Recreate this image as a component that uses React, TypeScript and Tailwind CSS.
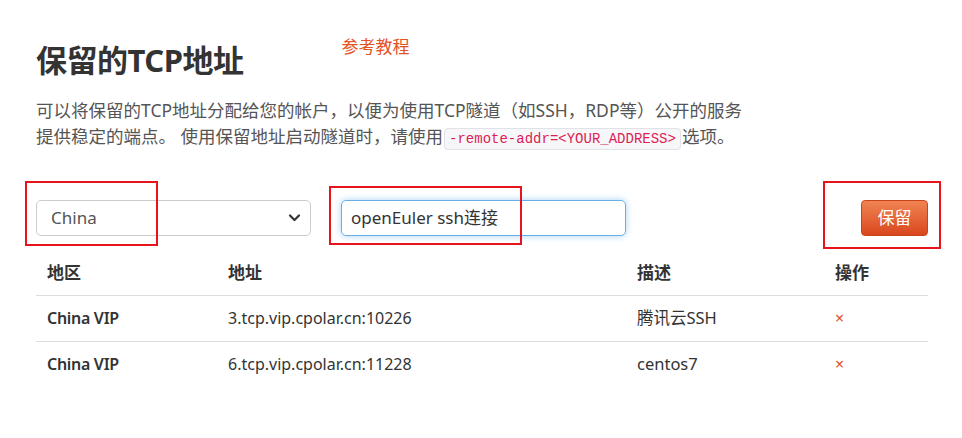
import React from 'react';

const rows = [
  { region: 'China VIP', addr: '3.tcp.vip.cpolar.cn:10226', desc: '腾讯云SSH' },
  { region: 'China VIP', addr: '6.tcp.vip.cpolar.cn:11228', desc: 'centos7' },
];

const App: React.FC = () => {
  return (
    <div
      className="relative w-[962px] h-[438px] bg-white text-[#333] pl-[36px] pt-[41px] overflow-hidden"
      style={{ fontFamily: '"Noto Sans", "Noto Sans CJK SC", sans-serif' }}
    >
      {/* Title */}
      <div className="flex items-start">
        <h1 className="text-[31px] leading-[38px] font-bold text-[#333] tracking-[-0.5px]">保留的TCP地址</h1>
        <a className="ml-[98px] -mt-[6px] text-[17px] leading-[24px] text-[#e4521f]">参考教程</a>
      </div>

      {/* Description */}
      <p className="mt-[18px] w-[780px] text-[17.5px] leading-[26px] text-[#555]">
        可以将保留的TCP地址分配给您的帐户，以便为使用TCP隧道（如SSH，RDP等）公开的服务
        <br />
        提供稳定的端点。 使用保留地址启动隧道时，请使用
        <code
          className="mx-[1px] px-[4px] py-[2px] rounded-[4px] border border-[#e1e1e8] bg-[#f7f7f9] text-[14px] text-[#dd1d55]"
          style={{ fontFamily: '"Liberation Mono", monospace' }}
        >
          -remote-addr=&lt;YOUR_ADDRESS&gt;
        </code>
        选项。
      </p>

      {/* Form row */}
      <div className="mt-[48px] w-[892px] flex items-center">
        <div className="relative w-[275px] h-[36px] border border-[#ccc] rounded-[5px] flex items-center pl-[14px] text-[17px] text-[#555]">
          China
          <svg className="absolute right-[9px] top-[12px]" width="13" height="10" viewBox="0 0 13 10">
            <path d="M2 2.5 L6.5 7 L11 2.5" fill="none" stroke="#333" strokeWidth="2.2" strokeLinecap="round" strokeLinejoin="round" />
          </svg>
        </div>
        <div className="ml-[30px] w-[285px] h-[36px] border border-[#66afe9] rounded-[5px] flex items-center pl-[9px] text-[17px] text-[#333] shadow-[0_0_7px_rgba(102,175,233,0.55)]">
          openEuler ssh连接
        </div>
        <button className="ml-auto w-[67px] h-[36px] rounded-[4px] border border-[#c9441b] bg-gradient-to-b from-[#f08352] to-[#d9461b] text-white text-[17px]">
          保留
        </button>
      </div>

      {/* Table */}
      <table className="mt-[14px] w-[892px] text-[17px] text-[#333] border-collapse">
        <thead>
          <tr className="border-b border-[#ddd] h-[45px]">
            <th className="w-[181px] pl-[11px] text-left font-bold">地区</th>
            <th className="w-[409px] pl-[11px] text-left font-bold">地址</th>
            <th className="w-[198px] pl-[11px] text-left font-bold">描述</th>
            <th className="w-[104px] pl-[11px] text-left font-bold">操作</th>
          </tr>
        </thead>
        <tbody>
          {rows.map((r, i) => (
            <tr key={i} className={`h-[46px] ${i === 0 ? 'border-b border-[#ddd]' : ''}`}>
              <td className="pl-[11px] font-semibold text-[16px] tracking-[-0.3px]">{r.region}</td>
              <td className="pl-[11px] text-[16px]">{r.addr}</td>
              <td className="pl-[11px] text-[16.5px]">{r.desc}</td>
              <td className="pl-[11px] text-[#e4521f] text-[16px]">×</td>
            </tr>
          ))}
        </tbody>
      </table>

      {/* Annotation boxes */}
      <div className="absolute left-[25px] top-[181px] w-[133px] h-[65px] border-2 border-[#e8141c]" />
      <div className="absolute left-[329px] top-[186px] w-[193px] h-[59px] border-2 border-[#e8141c]" />
      <div className="absolute left-[823px] top-[181px] w-[118px] h-[68px] border-2 border-[#e8141c]" />
    </div>
  );
};

export default App;
